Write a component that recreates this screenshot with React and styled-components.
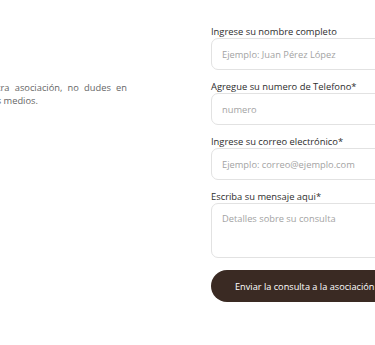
import React from 'react';
import styled, { createGlobalStyle } from 'styled-components';

const GlobalStyle = createGlobalStyle`
  html, body {
    margin: 0;
    padding: 0;
    background: #ffffff;
  }
  body {
    font-family: 'Open Sans', 'Noto Sans', sans-serif;
    color: #333333;
  }
`;

const fields = [
  { label: 'Ingrese su nombre completo', placeholder: 'Ejemplo: Juan Pérez López' },
  { label: 'Agregue su numero de Telefono*', placeholder: 'numero' },
  { label: 'Ingrese su correo electrónico*', placeholder: 'Ejemplo: correo@ejemplo.com' },
];

export default function App() {
  return (
    <>
      <GlobalStyle />
      <Page>
        <HeaderShadow />
        <ContactSection>
          <InfoColumn>
            <InfoText>
              Para más información de nuestra asociación, no dudes en
              contactarnos a través de nuestros medios.
            </InfoText>
          </InfoColumn>
          <Form onSubmit={(e) => e.preventDefault()}>
            {fields.map((field) => (
              <Field key={field.label}>
                <Label>{field.label}</Label>
                <Input type='text' placeholder={field.placeholder} />
              </Field>
            ))}
            <Field>
              <Label>Escriba su mensaje aqui*</Label>
              <TextArea placeholder='Detalles sobre su consulta' />
            </Field>
            <SubmitBtn type='submit'>Enviar la consulta a la asociación</SubmitBtn>
          </Form>
        </ContactSection>
      </Page>
    </>
  );
}

const Page = styled.div`
  width: 375px;
  height: 345px;
  overflow: hidden;
  position: relative;
`;

const HeaderShadow = styled.div`
  height: 0;
  box-shadow: 0 1px 7px rgba(0, 0, 0, 0.09);
`;

const ContactSection = styled.section`
  display: flex;
  gap: 84px;
  margin-left: -146px;
  padding-top: 26px;
`;

const InfoColumn = styled.div`
  flex: 0 0 273px;
  padding-top: 55px;
`;

const InfoText = styled.p`
  margin: 0;
  font-size: 9.3px;
  line-height: 13px;
  color: #666666;
  text-align: justify;
`;

const Form = styled.form`
  flex: 0 0 250px;
  display: flex;
  flex-direction: column;
  gap: 11px;
`;

const Field = styled.div`
  display: flex;
  flex-direction: column;
`;

const Label = styled.label`
  font-size: 9.4px;
  line-height: 12px;
  color: #2e2e2e;
`;

const inputBase = `
  box-sizing: border-box;
  width: 100%;
  border: 1px solid #e2e2e2;
  border-radius: 7px;
  padding: 0 10px;
  font-family: 'Open Sans', 'Noto Sans', sans-serif;
  font-size: 9.3px;
  color: #333333;
  background: #ffffff;
  outline: none;
  &::placeholder {
    color: #a3a3a3;
  }
`;

const Input = styled.input`
  ${inputBase}
  height: 32px;
`;

const TextArea = styled.textarea`
  ${inputBase}
  height: 55px;
  padding-top: 8px;
  resize: none;
`;

const SubmitBtn = styled.button`
  margin-top: 1px;
  height: 32px;
  border: none;
  border-radius: 16px;
  background: #3a2a23;
  color: #ffffff;
  font-family: 'Open Sans', 'Noto Sans', sans-serif;
  font-size: 9.2px;
  text-align: left;
  padding: 0 0 0 24px;
  white-space: nowrap;
  cursor: pointer;
`;
